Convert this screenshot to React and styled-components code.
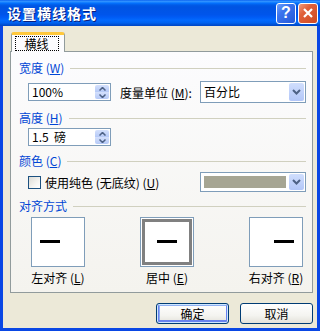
import React from 'react'
import styled, { createGlobalStyle } from 'styled-components'

const Global = createGlobalStyle`
  html, body { margin: 0; padding: 0; background: #fff; }
  body { font-family: "Noto Sans CJK SC", "Liberation Sans", sans-serif; font-size: 12px; }
`

const Window = styled.div`
  width: 320px;
  height: 331px;
  box-sizing: border-box;
  display: flex;
  flex-direction: column;
  background: #0a47e4;
  padding: 0 3px 3px 3px;
`

const TitleBar = styled.div`
  height: 26px;
  margin: 0 -3px;
  padding: 0 2px 0 7px;
  display: flex;
  align-items: center;
  background: linear-gradient(to bottom, #0058ee 0%, #3593ff 4%, #288eff 7%, #127dff 10%, #036ffc 13%, #0262ee 17%, #0057e5 22%, #0054e3 28%, #0055eb 56%, #005bf5 66%, #026afe 78%, #0062ef 88%, #0052d6 94%, #0046c4 100%);
`

const Title = styled.div`
  flex: 1;
  color: #fff;
  font-weight: bold;
  font-size: 14px;
  line-height: 16px;
  text-shadow: 1px 1px 0 #0a1e7a;
  letter-spacing: 1px;
`

const CapButton = styled.div`
  width: 20px;
  height: 21px;
  box-sizing: border-box;
  border: 1px solid #fff;
  border-radius: 3px;
  margin-left: 2px;
  display: flex;
  align-items: center;
  justify-content: center;
  color: #fff;
  font-family: "Liberation Sans", sans-serif;
  font-weight: bold;
  font-size: 16px;
  background: ${p => p.$red
    ? 'linear-gradient(135deg, #f09a7c 0%, #e0603a 35%, #cf4a22 100%)'
    : 'linear-gradient(135deg, #6fa0fb 0%, #3c74ee 35%, #2458d8 100%)'};
`

const Body = styled.div`
  flex: 1;
  background: #ece9d8;
  padding: 6px 4px 0 7px;
  display: flex;
  flex-direction: column;
`

const TabStrip = styled.div`
  display: flex;
  padding-left: 1px;
  position: relative;
  z-index: 1;
  margin-bottom: -1px;
`

const Tab = styled.div`
  width: 54px;
  height: 20px;
  box-sizing: border-box;
  background: #fcfcfe;
  border: 1px solid #919b9c;
  border-bottom: none;
  border-top: 3px solid #ffc83c;
  border-radius: 3px 3px 0 0;
  display: flex;
  align-items: flex-start;
  justify-content: center;
  padding-top: 1px;
`

const TabFocus = styled.div`
  border: 1px dotted #000;
  width: 44px;
  height: 15px;
  box-sizing: border-box;
  text-align: center;
  line-height: 13px;
  font-size: 12px;
  margin-left: -3px;
`

const Panel = styled.div`
  height: 242px;
  box-sizing: border-box;
  border: 1px solid #919b9c;
  background: linear-gradient(to bottom, #fcfcfe 0%, #f4f3ee 100%);
  padding: 8px 6px 0 8px;
  display: flex;
  flex-direction: column;
`

const Heading = styled.div`
  height: 14px;
  display: flex;
  align-items: center;
  color: #0046d5;
  font-size: 12px;
  white-space: pre;
  margin-top: ${p => p.$top || 0}px;
  &::after {
    content: '';
    flex: 1;
    height: 1px;
    margin: 2px 0 0 6px;
    background: #d0d0bf;
  }
`

const Row = styled.div`
  display: flex;
  align-items: center;
  padding-left: 9px;
  margin-top: ${p => p.$top || 0}px;
  height: ${p => p.$h}px;
`

const TextBox = styled.div`
  width: 83px;
  height: 18px;
  box-sizing: border-box;
  border: 1px solid #7f9db9;
  background: #fff;
  display: flex;
  align-items: center;
  padding-left: 3px;
  font-size: 12px;
`

const BoxText = styled.div`
  flex: 1;
  line-height: 14px;
  white-space: pre;
`

const Spin = styled.div`
  width: 14px;
  height: 14px;
  margin-right: 1px;
  display: flex;
  flex-direction: column;
`

const SpinHalf = styled.div`
  flex: 1;
  display: flex;
  align-items: center;
  justify-content: center;
  background: linear-gradient(to bottom, #d4e0fc, #b5c9f7);
  border-radius: ${p => (p.$up ? '2px 2px 0 0' : '0 0 2px 2px')};
`

const Label = styled.div`
  font-size: 12px;
  margin-left: ${p => p.$ml || 0}px;
  white-space: pre;
`

const Select = styled.div`
  margin-left: auto;
  width: 106px;
  height: ${p => p.$h}px;
  box-sizing: border-box;
  border: 1px solid #7f9db9;
  background: #fff;
  display: flex;
  align-items: center;
  padding: 0 1px 0 3px;
`

const DropBtn = styled.div`
  width: 15px;
  height: ${p => p.$h}px;
  border-radius: 2px;
  display: flex;
  align-items: center;
  justify-content: center;
  background: linear-gradient(to bottom, #d0defd, #b2c6f8);
`

const Swatch = styled.div`
  flex: 1;
  height: 12px;
  margin-right: 3px;
  background: #a6a593;
`

const Check = styled.div`
  width: 13px;
  height: 13px;
  box-sizing: border-box;
  border: 1px solid #1c5180;
  background: linear-gradient(135deg, #dcdbd5 0%, #f5f4f0 60%, #fff 100%);
`

const AlignRow = styled.div`
  display: flex;
  justify-content: space-between;
  padding: 0 3px 0 12px;
  margin-top: 5px;
`

const AlignItem = styled.div`
  width: 54px;
  display: flex;
  flex-direction: column;
  align-items: center;
`

const AlignBox = styled.div`
  width: 54px;
  height: 50px;
  box-sizing: border-box;
  border: 1px solid #7f9db9;
  background: #fff;
  display: flex;
  align-items: center;
  justify-content: ${p => p.$pos};
  padding: 0 8px;
  box-shadow: ${p => (p.$sel ? 'inset 0 0 0 1px #fff, inset 0 0 0 4px #808080' : 'none')};
`

const Dash = styled.div`
  width: 20px;
  height: 3px;
  background: #000;
  margin-top: -1px;
`

const AlignLabel = styled.div`
  margin-top: 2px;
  font-size: 12px;
  white-space: pre;
`

const Footer = styled.div`
  display: flex;
  justify-content: flex-end;
  gap: 11px;
  margin-top: 10px;
`

const Button = styled.div`
  width: 73px;
  height: 21px;
  box-sizing: border-box;
  border: 1px solid #003c74;
  border-radius: 3px;
  background: linear-gradient(to bottom, #fff 0%, #f4f4f0 60%, #e3e2da 100%);
  display: flex;
  align-items: center;
  justify-content: center;
  font-size: 12px;
  box-shadow: ${p => (p.$def ? 'inset 0 0 0 1px #cee7ff, inset 0 -1px 0 2px #6982ee, inset 1px 0 0 2px #8fb0f3' : 'none')};
`

const Up = () => (
  <svg width="7" height="4" viewBox="0 0 7 4"><path d="M0.5 3.5 L3.5 0.5 L6.5 3.5" fill="none" stroke="#4d6185" strokeWidth="1.5" /></svg>
)
const Down = () => (
  <svg width="7" height="4" viewBox="0 0 7 4"><path d="M0.5 0.5 L3.5 3.5 L6.5 0.5" fill="none" stroke="#4d6185" strokeWidth="1.5" /></svg>
)
const Chevron = () => (
  <svg width="9" height="6" viewBox="0 0 9 6"><path d="M1 1 L4.5 4.5 L8 1" fill="none" stroke="#4d6185" strokeWidth="2" /></svg>
)

function Spinner() {
  return (
    <Spin>
      <SpinHalf $up><Up /></SpinHalf>
      <SpinHalf><Down /></SpinHalf>
    </Spin>
  )
}

export default function App() {
  return (
    <Window>
      <Global />
      <TitleBar>
        <Title>设置横线格式</Title>
        <CapButton>?</CapButton>
        <CapButton $red>
          <svg width="12" height="12" viewBox="0 0 12 12"><path d="M2 2 L10 10 M10 2 L2 10" stroke="#fff" strokeWidth="2.2" /></svg>
        </CapButton>
      </TitleBar>
      <Body>
        <TabStrip>
          <Tab><TabFocus>横线</TabFocus></Tab>
        </TabStrip>
        <Panel>
          <Heading>宽度 (<u>W</u>)</Heading>
          <Row $top={7} $h={22}>
            <TextBox><BoxText>100%</BoxText><Spinner /></TextBox>
            <Label $ml={9}>度量单位 (<u>M</u>):</Label>
            <Select $h={22}><BoxText>百分比</BoxText><DropBtn $h={18}><Chevron /></DropBtn></Select>
          </Row>
          <Heading $top={7}>高度 (<u>H</u>)</Heading>
          <Row $top={4} $h={18}>
            <TextBox><BoxText>1.5  磅</BoxText><Spinner /></TextBox>
          </Row>
          <Heading $top={7}>颜色 (<u>C</u>)</Heading>
          <Row $top={5} $h={20}>
            <Check />
            <Label $ml={4}>使用纯色 (无底纹) (<u>U</u>)</Label>
            <Select $h={20}><Swatch /><DropBtn $h={16}><Chevron /></DropBtn></Select>
          </Row>
          <Heading $top={6}>对齐方式</Heading>
          <AlignRow>
            <AlignItem>
              <AlignBox $pos="flex-start"><Dash /></AlignBox>
              <AlignLabel>左对齐 (<u>L</u>)</AlignLabel>
            </AlignItem>
            <AlignItem>
              <AlignBox $pos="center" $sel><Dash /></AlignBox>
              <AlignLabel>居中 (<u>E</u>)</AlignLabel>
            </AlignItem>
            <AlignItem>
              <AlignBox $pos="flex-end"><Dash /></AlignBox>
              <AlignLabel>右对齐 (<u>R</u>)</AlignLabel>
            </AlignItem>
          </AlignRow>
        </Panel>
        <Footer>
          <Button $def>确定</Button>
          <Button>取消</Button>
        </Footer>
      </Body>
    </Window>
  )
}
